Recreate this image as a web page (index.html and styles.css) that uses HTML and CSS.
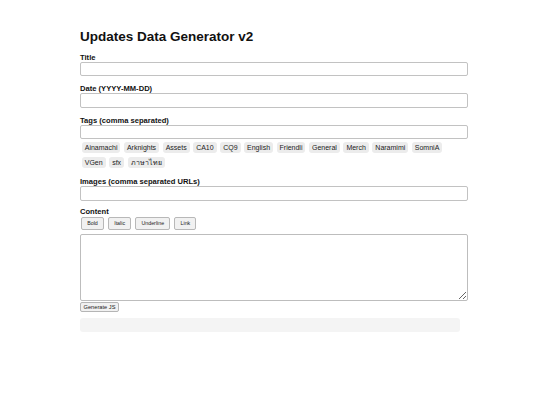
FILE: index.html
```html
<!DOCTYPE html>
<html lang="en">
<head>
<meta charset="utf-8">
<title>Updates Data Generator v2</title>
<link rel="stylesheet" href="styles.css">
</head>
<body>
<main class="page">
  <h1 class="heading">Updates Data Generator v2</h1>

  <div class="field">
    <label class="label" for="title">Title</label>
    <input class="input" id="title" type="text">
  </div>

  <div class="field">
    <label class="label" for="date">Date (YYYY-MM-DD)</label>
    <input class="input" id="date" type="text">
  </div>

  <div class="field">
    <label class="label" for="tags">Tags (comma separated)</label>
    <input class="input" id="tags" type="text">
    <div class="chips">
      <span class="chip">Ainamachi</span>
      <span class="chip">Arknights</span>
      <span class="chip">Assets</span>
      <span class="chip">CA10</span>
      <span class="chip">CQ9</span>
      <span class="chip">English</span>
      <span class="chip">Friendli</span>
      <span class="chip">General</span>
      <span class="chip">Merch</span>
      <span class="chip">Naramimi</span>
      <span class="chip">SomniA</span>
      <span class="chip">VGen</span>
      <span class="chip">sfx</span>
      <span class="chip">ภาษาไทย</span>
    </div>
  </div>

  <div class="field field-images">
    <label class="label" for="images">Images (comma separated URLs)</label>
    <input class="input" id="images" type="text">
  </div>

  <div class="field field-content">
    <label class="label" for="content">Content</label>
    <div class="toolbar">
      <button class="tool" type="button">Bold</button>
      <button class="tool" type="button">Italic</button>
      <button class="tool" type="button">Underline</button>
      <button class="tool" type="button">Link</button>
    </div>
    <textarea class="textarea" id="content"></textarea>
  </div>

  <button class="generate" type="button">Generate JS</button>
  <pre class="output"></pre>
</main>
</body>
</html>
```

FILE: styles.css
```css
html, body {
  margin: 0;
  padding: 0;
  background: #ffffff;
}

body {
  font-family: "Liberation Sans", Arial, "Noto Sans", sans-serif;
  color: #111111;
}

.page {
  width: 388px;
  margin-left: 80px;
  padding-top: 29px;
}

.heading {
  font-size: 13.5px;
  font-weight: bold;
  line-height: 16px;
  margin: 0 0 8px 0;
  color: #111111;
}

.field {
  margin-bottom: 8px;
}

.field-images {
  margin-bottom: 6px;
}

.label {
  display: block;
  font-size: 7.6px;
  font-weight: bold;
  line-height: 9px;
  margin-bottom: 0;
  color: #111111;
}

.input {
  display: block;
  box-sizing: border-box;
  width: 100%;
  height: 14.3px;
  margin: 0;
  padding: 1px 3px;
  border: 1px solid #c2c2c2;
  border-radius: 2px;
  background: #ffffff;
  font-family: inherit;
  font-size: 7px;
}

.chips {
  display: flex;
  flex-wrap: wrap;
  margin-top: 2px;
}

.chip {
  background: #ececec;
  border-radius: 3px;
  font-size: 7px;
  line-height: 11px;
  padding: 0 3px;
  margin: 1.6px 1.75px;
  color: #222222;
}

.toolbar {
  display: flex;
  gap: 4px;
  padding-left: 1px;
  margin-top: 1px;
  margin-bottom: 4px;
}

.tool {
  box-sizing: border-box;
  height: 13.5px;
  padding: 0 5.2px;
  margin: 0;
  border: 1px solid #b8b8b8;
  border-radius: 2px;
  background: #f1f1f1;
  font-family: inherit;
  font-size: 5.3px;
  line-height: 11px;
  color: #222222;
}

.textarea {
  display: block;
  box-sizing: border-box;
  width: 100%;
  height: 67px;
  margin: 0;
  border: 1px solid #bdbdbd;
  border-radius: 2px;
  font-family: inherit;
  font-size: 7px;
}

.field-content {
  margin-bottom: 1px;
}

.generate {
  display: block;
  box-sizing: border-box;
  height: 10px;
  padding: 0 2.5px;
  margin: 0;
  border: 1px solid #b5b5b5;
  border-radius: 2px;
  background: #f1f1f1;
  font-family: inherit;
  font-size: 5.7px;
  line-height: 8px;
  color: #222222;
}

.output {
  box-sizing: border-box;
  width: 380px;
  height: 14px;
  margin: 6px 0 0 0;
  background: #f4f4f4;
  border-radius: 3px;
}
```
